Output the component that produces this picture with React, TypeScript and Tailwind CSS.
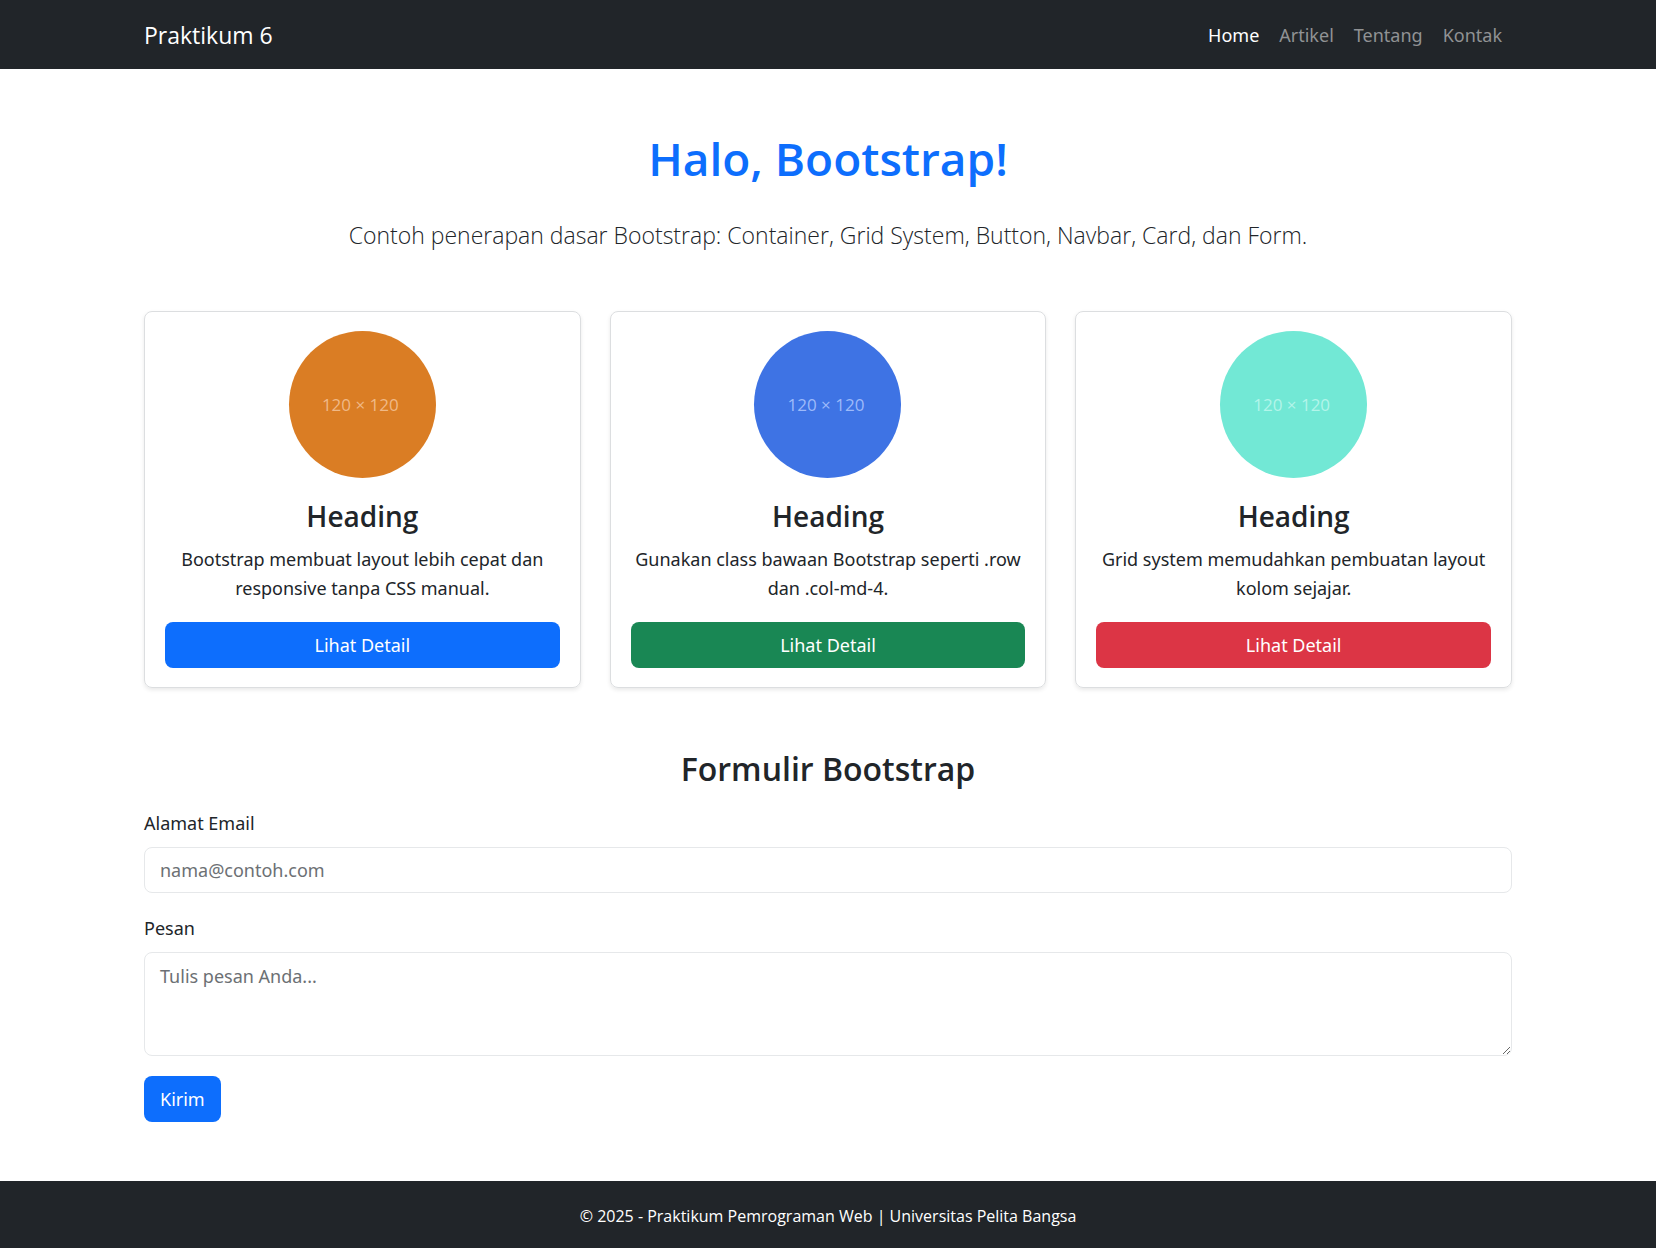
const navLinks = [
  { label: "Home", active: true },
  { label: "Artikel", active: false },
  { label: "Tentang", active: false },
  { label: "Kontak", active: false },
];

const cards = [
  {
    text: "Bootstrap membuat layout lebih cepat dan responsive tanpa CSS manual.",
    circle: "bg-[#da7d24] text-[#f0b987]",
    button: "bg-[#0d6efd]",
  },
  {
    text: "Gunakan class bawaan Bootstrap seperti .row dan .col-md-4.",
    circle: "bg-[#3e73e4] text-[#9dbafa]",
    button: "bg-[#198754]",
  },
  {
    text: "Grid system memudahkan pembuatan layout kolom sejajar.",
    circle: "bg-[#72e8d5] text-[#b3f5ea]",
    button: "bg-[#dc3545]",
  },
];

const field =
  "block w-full rounded-lg border border-[#e6e8ea] bg-white px-[15px] placeholder:text-[#6c7074]";

export default function App() {
  return (
    <div className="flex min-h-screen flex-col bg-white font-['Noto_Sans','Open_Sans',sans-serif] text-[18px] leading-[29px] text-[#212529]">
      <nav className="bg-[#212529] px-4 pt-[17px] pb-[15px]">
        <div className="mx-auto flex max-w-[1368px] items-center justify-between">
          <a href="#" className="font-['Open_Sans',sans-serif] text-[23px] leading-[37px] text-white">
            Praktikum 6
          </a>
          <ul className="flex gap-5 pr-2.5">
            {navLinks.map((link) => (
              <li key={link.label}>
                <a href="#" className={link.active ? "text-white" : "text-[#909294]"}>
                  {link.label}
                </a>
              </li>
            ))}
          </ul>
        </div>
      </nav>

      <main className="mx-auto w-full max-w-[1400px] flex-1 px-4 pt-[60px] pb-[59px]">
        <header className="text-center font-['Open_Sans',sans-serif]">
          <h1 className="text-[46px] leading-[59px] font-semibold text-[#0d6efd]">Halo, Bootstrap!</h1>
          <p className="mt-[29px] text-[23px] leading-[37px] font-light">
            Contoh penerapan dasar Bootstrap: Container, Grid System, Button, Navbar, Card, dan Form.
          </p>
        </header>

        <section className="mt-[57px] grid gap-[29px] md:grid-cols-3">
          {cards.map((card) => (
            <article
              key={card.button}
              className="flex flex-col items-center rounded-lg border border-[#dcdee0] px-5 py-[19px] text-center shadow-[0_2px_4px_rgba(0,0,0,0.09)]"
            >
              <div className={`flex size-[147px] items-center justify-center rounded-full pr-1 font-['Open_Sans',sans-serif] text-[17px] ${card.circle}`}>
                120 × 120
              </div>
              <h2 className="mt-[21px] font-['Open_Sans',sans-serif] text-[28px] leading-[35px] font-semibold">Heading</h2>
              <p className="mt-[11px] mb-[19px]">{card.text}</p>
              <button type="button" className={`mt-auto w-full rounded-lg py-[9px] leading-[28px] text-white ${card.button}`}>
                Lihat Detail
              </button>
            </article>
          ))}
        </section>

        <section className="mt-[60px]">
          <h2 className="text-center font-['Open_Sans',sans-serif] text-[32px] leading-[41px] font-semibold">
            Formulir Bootstrap
          </h2>
          <form className="mt-5">
            <label htmlFor="email" className="block">
              Alamat Email
            </label>
            <input id="email" type="email" placeholder="nama@contoh.com" className={`mt-[9px] h-[46px] ${field}`} />
            <label htmlFor="pesan" className="mt-[21px] block">
              Pesan
            </label>
            <textarea
              id="pesan"
              rows={3}
              placeholder="Tulis pesan Anda..."
              className={`mt-[9px] h-[104px] resize py-[9px] ${field}`}
            />
            <button type="button" className="mt-5 rounded-lg bg-[#0d6efd] px-4 py-[9px] leading-[28px] text-white">
              Kirim
            </button>
          </form>
        </section>
      </main>

      <footer className="bg-[#212529] px-4 pt-[22px] pb-[18px] text-center font-['Open_Sans',sans-serif] text-[16px] leading-[27px] text-white">
        © 2025 - Praktikum Pemrograman Web | Universitas Pelita Bangsa
      </footer>
    </div>
  );
}
